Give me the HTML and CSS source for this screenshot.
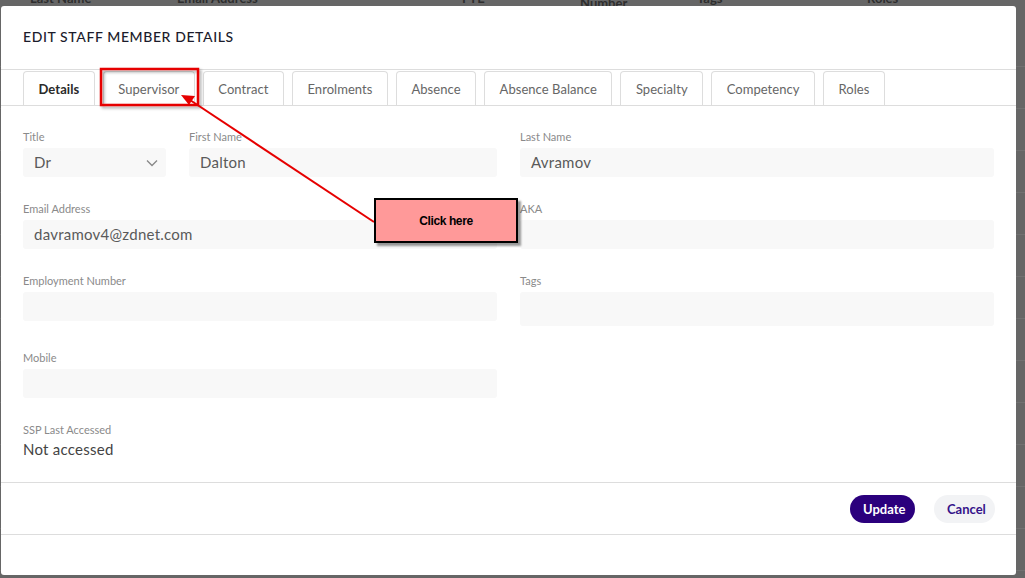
FILE: index.html
```html
<!DOCTYPE html>
<html lang="en">
<head>
  <meta charset="UTF-8" />
  <title>Edit Staff Member Details</title>
  <link rel="stylesheet" href="styles.css">
</head>
<body>

<!-- page behind the dialog -->
<div class="backdrop">
  <div class="backdrop-head">
    <span class="bh-last">Last Name</span>
    <span class="bh-email">Email Address</span>
    <span class="bh-fte">FTE</span>
    <span class="bh-num">Number</span>
    <span class="bh-tags">Tags</span>
    <span class="bh-roles">Roles</span>
  </div>
</div>

<div class="modal">
  <div class="modal-header">
    <h2>EDIT STAFF MEMBER DETAILS</h2>
  </div>

  <div class="tabs">
    <div class="tab active">Details</div>
    <div class="tab">Supervisor</div>
    <div class="tab">Contract</div>
    <div class="tab">Enrolments</div>
    <div class="tab">Absence</div>
    <div class="tab">Absence Balance</div>
    <div class="tab">Specialty</div>
    <div class="tab">Competency</div>
    <div class="tab">Roles</div>
  </div>

  <div class="form">
    <div class="row">
      <div class="half split">
        <div class="field title-field">
          <label>Title</label>
          <div class="input select">Dr
            <svg class="chevron" width="12" height="8" viewBox="0 0 12 8"><path d="M1 1.5 L6 6.5 L11 1.5" fill="none" stroke="#888" stroke-width="1.3"/></svg>
          </div>
        </div>
        <div class="field grow">
          <label>First Name</label>
          <div class="input">Dalton</div>
        </div>
      </div>
      <div class="half field">
        <label>Last Name</label>
        <div class="input">Avramov</div>
      </div>
    </div>

    <div class="row">
      <div class="half field">
        <label>Email Address</label>
        <div class="input">davramov4@zdnet.com</div>
      </div>
      <div class="half field">
        <label>AKA</label>
        <div class="input"></div>
      </div>
    </div>

    <div class="row">
      <div class="half field">
        <label>Employment Number</label>
        <div class="input"></div>
      </div>
      <div class="half field">
        <label>Tags</label>
        <div class="input tags"></div>
      </div>
    </div>

    <div class="row">
      <div class="half field">
        <label>Mobile</label>
        <div class="input"></div>
      </div>
    </div>

    <div class="row">
      <div class="half field">
        <label>SSP Last Accessed</label>
        <div class="value">Not accessed</div>
      </div>
    </div>
  </div>

  <div class="modal-footer">
    <button class="btn primary">Update</button>
    <button class="btn secondary">Cancel</button>
  </div>
</div>

<!-- tutorial annotation on top -->
<svg class="annotation" width="1025" height="578" viewBox="0 0 1025 578">
  <defs>
    <filter id="shade" x="-10%" y="-10%" width="130%" height="140%">
      <feDropShadow dx="2" dy="2" stdDeviation="1.5" flood-color="#000" flood-opacity="0.35"/>
    </filter>
  </defs>
  <rect x="101" y="69" width="97" height="36" fill="none" stroke="#e60000" stroke-width="2.5" filter="url(#shade)"/>
  <line x1="374" y1="222" x2="190" y2="100" stroke="#e60000" stroke-width="2"/>
  <polygon points="181,95 195,96 189,105" fill="#e60000"/>
</svg>
<div class="callout">Click here</div>

</body>
</html>
```

FILE: styles.css
```css
body {
  margin: 0;
  width: 1025px;
  height: 578px;
  overflow: hidden;
  background: #666;
  font-family: 'Lato', 'Open Sans', sans-serif;
  position: relative;
}
.backdrop {
  position: absolute;
  inset: 0;
  background: repeating-linear-gradient(to bottom, #666 0, #666 41px, #717171 41px, #717171 42px);
  background-position: 0 25px;
}
.backdrop-head {
  position: absolute;
  top: -10px;
  left: 0;
  right: 0;
  height: 20px;
  font-size: 13px;
  font-weight: 700;
  color: #2e2e2e;
}
.backdrop-head span {
  position: absolute;
  top: 0;
}
.bh-last { left: 30px; }
.bh-email { left: 177px; }
.bh-fte { left: 462px; }
.bh-num { left: 580px; top: 5px !important; }
.bh-tags { left: 697px; }
.bh-roles { left: 867px; }

.modal {
  position: absolute;
  left: 1px;
  top: 6px;
  width: 1015px;
  height: 569px;
  background: #fff;
  border-radius: 3px;
  display: flex;
  flex-direction: column;
}
.modal > * {
  flex-shrink: 0;
}
.modal-header {
  height: 64px;
  border-bottom: 1px solid #ddd;
  padding: 22px 22px 0;
  box-sizing: border-box;
}
.modal-header h2 {
  margin: 0;
  font-size: 14px;
  line-height: 18px;
  font-weight: 500;
  color: #1c1c2c;
  letter-spacing: 0.6px;
}
.tabs {
  display: flex;
  gap: 8px;
  padding: 1px 22px 0;
  border-bottom: 1px solid #ddd;
}
.tab {
  height: 33px;
  line-height: 34px;
  padding: 0 14.5px;
  border: 1px solid #ddd;
  border-bottom: none;
  border-radius: 4px 4px 0 0;
  font-size: 13px;
  color: #666;
  letter-spacing: 0.05px;
}
.tab.active {
  color: #2a2a2a;
  font-weight: 700;
}

.form {
  height: 376px;
  box-sizing: border-box;
  padding: 24px 22px 0;
}
.row {
  display: flex;
  gap: 23px;
  margin-bottom: 25px;
}
.half {
  width: 474px;
}
.split {
  display: flex;
  gap: 23px;
}
.field label {
  display: block;
  font-size: 11px;
  line-height: 14px;
  color: #8a8a8a;
  margin-bottom: 4px;
}
.title-field {
  width: 143px;
}
.grow {
  flex: 1;
}
.input {
  height: 29px;
  line-height: 29px;
  background: #f8f8f8;
  border-radius: 3px;
  padding: 0 11px;
  font-size: 15px;
  color: #5a5a5a;
  letter-spacing: 0.25px;
  box-sizing: border-box;
  position: relative;
}
.input.tags {
  height: 34px;
}
.select .chevron {
  position: absolute;
  right: 8px;
  top: 11px;
}
.value {
  font-size: 15px;
  color: #444;
  line-height: 20px;
  letter-spacing: 0.25px;
  margin-top: -2px;
}

.modal-footer {
  height: 51px;
  border-top: 1px solid #ddd;
  border-bottom: 1px solid #ddd;
  display: flex;
  align-items: center;
  justify-content: flex-end;
  gap: 19px;
  padding: 0 21px;
}
.btn {
  height: 28px;
  border: none;
  border-radius: 14px;
  font-family: inherit;
  font-size: 13px;
  font-weight: 700;
  padding: 0 13px;
}
.primary {
  background: #2b007d;
  color: #fff;
  width: 65px;
}
.secondary {
  background: #f2f3f5;
  color: #35138a;
  width: 61px;
}

.annotation {
  position: absolute;
  left: 0;
  top: 0;
}
.callout {
  position: absolute;
  left: 374px;
  top: 198px;
  width: 140px;
  height: 41px;
  background: #ff9999;
  border: 2px solid #000;
  box-shadow: 3px 3px 2px rgba(0, 0, 0, 0.4);
  font-family: 'Liberation Sans', Arial, sans-serif;
  font-weight: 700;
  font-size: 12px;
  letter-spacing: -0.4px;
  display: flex;
  align-items: center;
  justify-content: center;
  color: #000;
}
```
